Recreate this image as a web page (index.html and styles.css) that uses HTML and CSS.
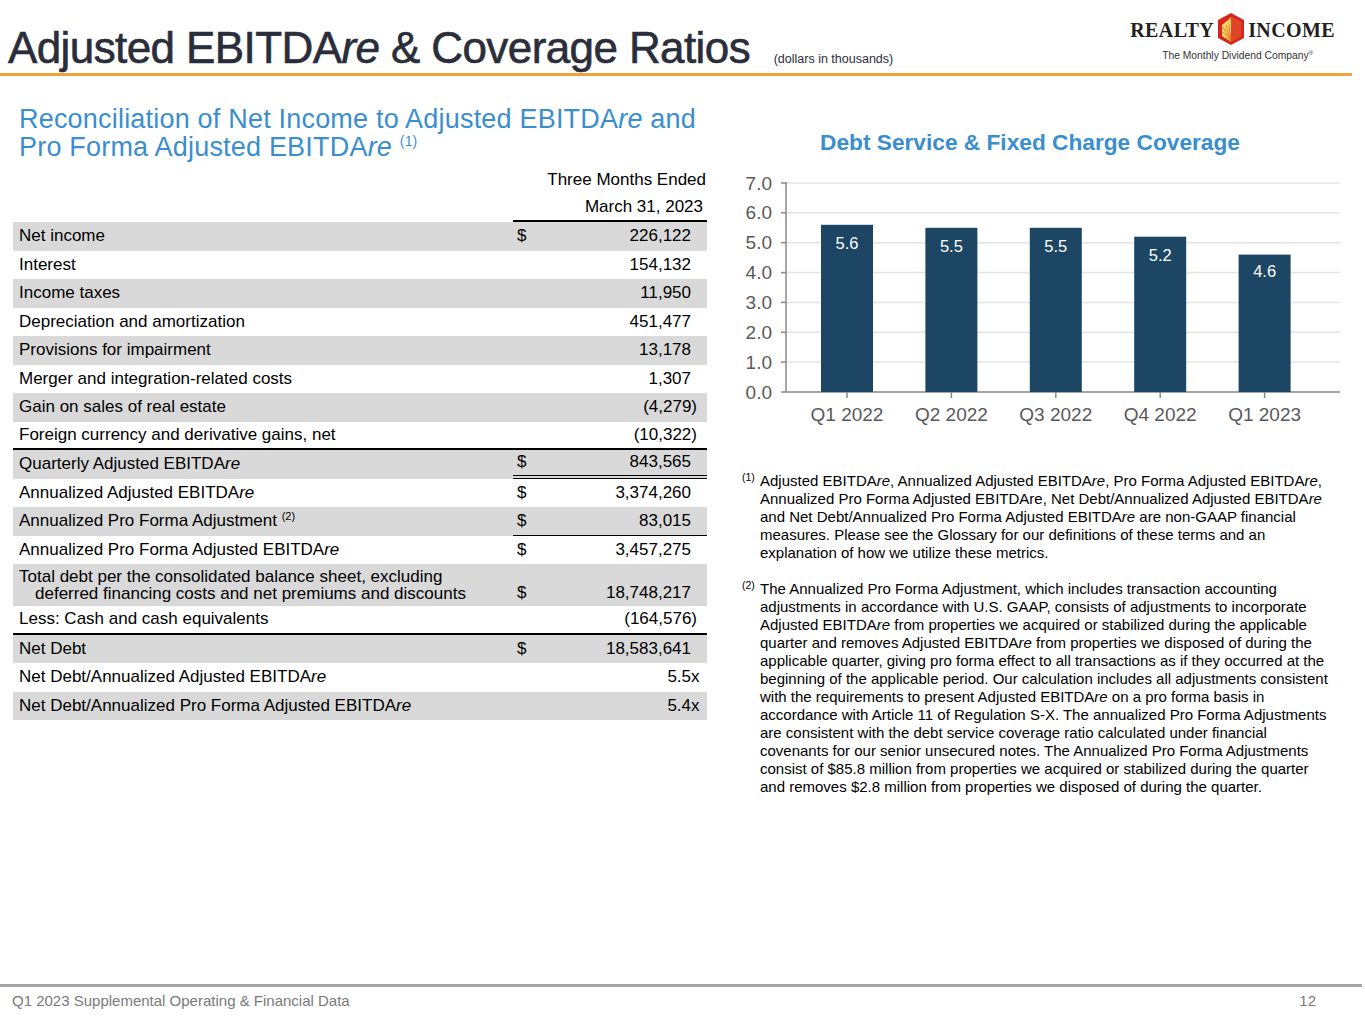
FILE: index.html
```html
<!DOCTYPE html>
<html lang="en">
<head>
<meta charset="utf-8">
<title>Adjusted EBITDAre &amp; Coverage Ratios</title>
<link rel="stylesheet" href="styles.css">
</head>
<body>
<div class="page">
  <header class="top">
    <h1 class="title">Adjusted EBITDA<i>re</i> &amp; Coverage Ratios <span class="units">(dollars in thousands)</span></h1>
    <div class="logo">
      <div class="logo-row">
        <span class="logo-word">REALTY</span>
        <svg class="logo-mark" width="26" height="32" viewBox="0 0 26 32" aria-hidden="true">
          <polygon points="13,0 26,7 26,25 13,32 0,25 0,7" fill="#d7261e"/>
          <polygon points="13,4 23,9.5 23,23 13,28.5 4,23 4,12" fill="#f39a2b"/>
          <polygon points="4,12 13,6 13,28.5 4,23" fill="#fbd46a"/>
          <path d="M13 28 L5 14 M13 28 L8 12 M13 28 L11 10 M13 28 L5 19" stroke="#ef7d22" stroke-width="1"/>
          <polygon points="13,4 23,9.5 23,23 13,28.5" fill="#e0452a"/>
        </svg>
        <span class="logo-word">INCOME</span>
      </div>
      <div class="tagline">The Monthly Dividend Company<sup>®</sup></div>
    </div>
  </header>
  <div class="rule"></div>

  <main class="content">
    <section class="left">
      <h2 class="subtitle">Reconciliation of Net Income to Adjusted EBITDA<i>re</i> and<br>Pro Forma Adjusted EBITDA<i>re</i> <sup>(1)</sup></h2>
      <table class="recon">
        <colgroup><col class="c-label"><col class="c-cur"><col class="c-val"></colgroup>
        <tr class="head"><td></td><td colspan="2" class="h1">Three Months Ended</td></tr>
        <tr class="head"><td></td><td colspan="2" class="h2 under">March 31, 2023</td></tr>
        <tr class="g"><td class="lbl">Net income</td><td class="cur">$</td><td class="num">226,122</td></tr>
        <tr><td class="lbl">Interest</td><td class="cur"></td><td class="num">154,132</td></tr>
        <tr class="g"><td class="lbl">Income taxes</td><td class="cur"></td><td class="num">11,950</td></tr>
        <tr><td class="lbl">Depreciation and amortization</td><td class="cur"></td><td class="num">451,477</td></tr>
        <tr class="g"><td class="lbl">Provisions for impairment</td><td class="cur"></td><td class="num">13,178</td></tr>
        <tr><td class="lbl">Merger and integration-related costs</td><td class="cur"></td><td class="num">1,307</td></tr>
        <tr class="g"><td class="lbl">Gain on sales of real estate</td><td class="cur"></td><td class="num">(4,279<span class="hang">)</span></td></tr>
        <tr class="total"><td class="lbl up">Foreign currency and derivative gains, net</td><td class="cur"></td><td class="num">(10,322<span class="hang">)</span></td></tr>
        <tr class="g"><td class="lbl">Quarterly Adjusted EBITDA<i>re</i></td><td class="cur dbl">$</td><td class="num dbl">843,565</td></tr>
        <tr><td class="lbl">Annualized Adjusted EBITDA<i>re</i></td><td class="cur">$</td><td class="num">3,374,260</td></tr>
        <tr class="g"><td class="lbl">Annualized Pro Forma Adjustment <sup>(2)</sup></td><td class="cur sgl">$</td><td class="num sgl">83,015</td></tr>
        <tr><td class="lbl">Annualized Pro Forma Adjusted EBITDA<i>re</i></td><td class="cur">$</td><td class="num">3,457,275</td></tr>
        <tr class="g tall"><td class="lbl wrap">Total debt per the consolidated balance sheet, excluding deferred financing costs and net premiums and discounts</td><td class="cur bottom">$</td><td class="num bottom">18,748,217</td></tr>
        <tr class="total"><td class="lbl">Less: Cash and cash equivalents</td><td class="cur"></td><td class="num">(164,576<span class="hang">)</span></td></tr>
        <tr class="g"><td class="lbl">Net Debt</td><td class="cur">$</td><td class="num">18,583,641</td></tr>
        <tr><td class="lbl">Net Debt/Annualized Adjusted EBITDA<i>re</i></td><td class="cur"></td><td class="num">5.5<span class="hang x">x</span></td></tr>
        <tr class="g"><td class="lbl">Net Debt/Annualized Pro Forma Adjusted EBITDA<i>re</i></td><td class="cur"></td><td class="num">5.4<span class="hang x">x</span></td></tr>
      </table>
    </section>

    <section class="right">
      <h3 class="chart-title">Debt Service &amp; Fixed Charge Coverage</h3>
      <svg class="chart" width="620" height="270" viewBox="0 0 620 270">
        <g class="grid" stroke="#e4e4e4" stroke-width="1.5">
          <line x1="56" y1="197.1" x2="610" y2="197.1"/>
          <line x1="56" y1="167.3" x2="610" y2="167.3"/>
          <line x1="56" y1="137.4" x2="610" y2="137.4"/>
          <line x1="56" y1="107.6" x2="610" y2="107.6"/>
          <line x1="56" y1="77.7" x2="610" y2="77.7"/>
          <line x1="56" y1="47.8" x2="610" y2="47.8"/>
          <line x1="56" y1="18" x2="610" y2="18"/>
        </g>
        <g stroke="#8a8a8a" stroke-width="1.5">
          <line x1="56" y1="17" x2="56" y2="227"/>
          <line x1="56" y1="227" x2="610" y2="227"/>
          <line x1="51" y1="18" x2="56" y2="18"/>
          <line x1="51" y1="47.8" x2="56" y2="47.8"/>
          <line x1="51" y1="77.7" x2="56" y2="77.7"/>
          <line x1="51" y1="107.6" x2="56" y2="107.6"/>
          <line x1="51" y1="137.4" x2="56" y2="137.4"/>
          <line x1="51" y1="167.3" x2="56" y2="167.3"/>
          <line x1="51" y1="197.1" x2="56" y2="197.1"/>
          <line x1="51" y1="227" x2="56" y2="227"/>
          <line x1="117" y1="227" x2="117" y2="233"/>
          <line x1="221.4" y1="227" x2="221.4" y2="233"/>
          <line x1="325.8" y1="227" x2="325.8" y2="233"/>
          <line x1="430.2" y1="227" x2="430.2" y2="233"/>
          <line x1="534.6" y1="227" x2="534.6" y2="233"/>
        </g>
        <g class="ylab" fill="#595959" text-anchor="end">
          <text x="42" y="233.5">0.0</text>
          <text x="42" y="203.6">1.0</text>
          <text x="42" y="173.8">2.0</text>
          <text x="42" y="143.9">3.0</text>
          <text x="42" y="114.1">4.0</text>
          <text x="42" y="84.2">5.0</text>
          <text x="42" y="54.3">6.0</text>
          <text x="42" y="24.5">7.0</text>
        </g>
        <g fill="#1c4664">
          <rect x="91" y="59.8" width="52" height="167.2"/>
          <rect x="195.4" y="62.8" width="52" height="164.2"/>
          <rect x="299.8" y="62.8" width="52" height="164.2"/>
          <rect x="404.2" y="71.7" width="52" height="155.3"/>
          <rect x="508.6" y="89.6" width="52" height="137.4"/>
        </g>
        <g class="blab" fill="#ffffff" text-anchor="middle">
          <text x="117" y="83.5">5.6</text>
          <text x="221.4" y="86.5">5.5</text>
          <text x="325.8" y="86.5">5.5</text>
          <text x="430.2" y="95.5">5.2</text>
          <text x="534.6" y="112">4.6</text>
        </g>
        <g class="xlab" fill="#595959" text-anchor="middle">
          <text x="117" y="256">Q1 2022</text>
          <text x="221.4" y="256">Q2 2022</text>
          <text x="325.8" y="256">Q3 2022</text>
          <text x="430.2" y="256">Q4 2022</text>
          <text x="534.6" y="256">Q1 2023</text>
        </g>
      </svg>
      <div class="notes">
        <p class="note"><sup class="mark">(1)</sup>Adjusted EBITDA<i>re</i>, Annualized Adjusted EBITDA<i>re</i>, Pro Forma Adjusted EBITDA<i>re</i>, Annualized Pro Forma Adjusted EBITDAre, Net Debt/Annualized Adjusted EBITDA<i>re</i> and Net Debt/Annualized Pro Forma Adjusted EBITDA<i>re</i> are non-GAAP financial measures. Please see the Glossary for our definitions of these terms and an explanation of how we utilize these metrics.</p>
        <p class="note"><sup class="mark">(2)</sup>The Annualized Pro Forma Adjustment, which includes transaction accounting adjustments in accordance with U.S. GAAP, consists of adjustments to incorporate Adjusted EBITDA<i>re</i> from properties we acquired or stabilized during the applicable quarter and removes Adjusted EBITDA<i>re</i> from properties we disposed of during the applicable quarter, giving pro forma effect to all transactions as if they occurred at the beginning of the applicable period. Our calculation includes all adjustments consistent with the requirements to present Adjusted EBITDA<i>re</i> on a pro forma basis in accordance with Article 11 of Regulation S-X. The annualized Pro Forma Adjustments are consistent with the debt service coverage ratio calculated under financial covenants for our senior unsecured notes. The Annualized Pro Forma Adjustments consist of $85.8 million from properties we acquired or stabilized during the quarter and removes $2.8 million from properties we disposed of during the quarter.</p>
      </div>
    </section>
  </main>

  <footer class="foot">
    <span>Q1 2023 Supplemental Operating &amp; Financial Data</span>
    <span>12</span>
  </footer>
</div>
</body>
</html>
```

FILE: styles.css
```css
* { box-sizing: border-box; }
html, body { margin: 0; padding: 0; background: #ffffff; }
body { font-family: "Liberation Sans", Arial, sans-serif; color: #000; }

.page {
  width: 1365px;
  height: 1024px;
  display: flex;
  flex-direction: column;
  overflow: hidden;
}

/* header */
.top {
  display: flex;
  justify-content: space-between;
  align-items: flex-start;
  height: 73px;
}
.title {
  margin: 0;
  padding: 23px 0 0 8px;
  font-size: 44px;
  line-height: 50px;
  font-weight: 400;
  letter-spacing: -0.6px;
  color: #2a2e3a;
  white-space: nowrap;
  -webkit-text-stroke: 0.6px #2a2e3a;
}
.title i { font-style: italic; }
.units {
  font-size: 12.5px;
  letter-spacing: 0;
  margin-left: 12px;
  color: #2a2e3a;
  -webkit-text-stroke: 0;
}
.logo {
  margin: 13px 30px 0 0;
  display: flex;
  flex-direction: column;
  align-items: center;
}
.logo-row {
  display: flex;
  align-items: center;
  gap: 4px;
  height: 32px;
}
.logo-word {
  font-family: "Liberation Serif", "Times New Roman", serif;
  font-weight: 700;
  font-size: 20px;
  letter-spacing: 0.4px;
  color: #231f20;
  line-height: 1;
  padding-top: 2px;
}
.logo-mark { display: block; }
.tagline {
  font-size: 10.3px;
  color: #333;
  margin-top: 2px;
  margin-left: 10px;
  line-height: 12px;
}
.tagline sup { font-size: 6px; }

.rule {
  height: 3px;
  width: 1352px;
  background: #f2a23c;
}

/* content */
.content {
  display: flex;
  padding-top: 29px;
  flex: 1;
}
.left {
  margin-left: 13px;
  width: 694px;
}
.subtitle {
  margin: 0;
  padding-left: 6px;
  font-size: 27px;
  line-height: 28px;
  font-weight: 400;
  letter-spacing: 0.2px;
  color: #3a8ed0;
  white-space: nowrap;
}
.subtitle sup { font-size: 14px; vertical-align: 10px; line-height: 0; }

.recon {
  margin-top: 5px;
  width: 694px;
  border-collapse: separate;
  border-spacing: 0;
  font-size: 17px;
  table-layout: fixed;
}
.c-label { width: 500px; }
.c-cur { width: 27px; }
.c-val { width: 167px; }
.recon td {
  height: 28.5px;
  padding: 0;
  line-height: 20px;
  vertical-align: middle;
  white-space: nowrap;
}
.recon tr.g td { background: #d9d9d9; }
.recon .lbl { padding-left: 6px; }
.recon .lbl.up { vertical-align: top; padding-top: 3px; }
.recon .cur { padding-left: 4px; }
.recon .num { text-align: right; padding-right: 16px; }
.hang { margin-right: -6px; }
.hang.x { margin-right: -8.5px; }
.recon sup { font-size: 11px; vertical-align: 6px; line-height: 0; }
.recon .head td { height: 28px; }
.recon .h1 { text-align: right; padding-right: 1px; }
.recon .h2 { text-align: right; padding-right: 4px; }
.recon .under { border-bottom: 2px solid #000; }
.recon tr.total td { border-bottom: 2px solid #000; }
.recon .dbl { border-bottom: 4px double #000; }
.recon .sgl { border-bottom: 1.5px solid #000; }
.recon tr.tall td { height: 42px; }
.recon .wrap {
  white-space: normal;
  line-height: 17px;
  padding-left: 22px;
  text-indent: -16px;
  padding-right: 40px;
}
.recon .bottom { vertical-align: bottom; padding-bottom: 3px; }

/* right column */
.right {
  margin-left: 23px;
  width: 620px;
}
.chart-title {
  margin: 23px 0 0;
  font-size: 22.7px;
  line-height: 28px;
  font-weight: 700;
  color: #3a8ecf;
  text-align: center;
  padding-right: 20px;
  white-space: nowrap;
}
.chart {
  display: block;
  margin-top: 9px;
  font-family: "Liberation Sans", Arial, sans-serif;
}
.ylab, .xlab { font-size: 19px; }
.blab { font-size: 16.5px; }

.notes {
  margin-top: 37px;
  padding-left: 12px;
  width: 604px;
}
.note {
  margin: 0 0 18px;
  font-size: 15px;
  line-height: 18px;
  padding-left: 18px;
  text-indent: -18px;
}
.note .mark {
  display: inline-block;
  width: 18px;
  text-indent: 0;
  font-size: 10.5px;
  vertical-align: 5px;
  line-height: 0;
}

/* footer */
.foot {
  border-top: 3px solid #a6a6a6;
  width: 1362px;
  display: flex;
  justify-content: space-between;
  padding: 4px 46px 13px 12px;
  font-size: 15px;
  line-height: 20px;
  color: #7a7a7a;
}
```
